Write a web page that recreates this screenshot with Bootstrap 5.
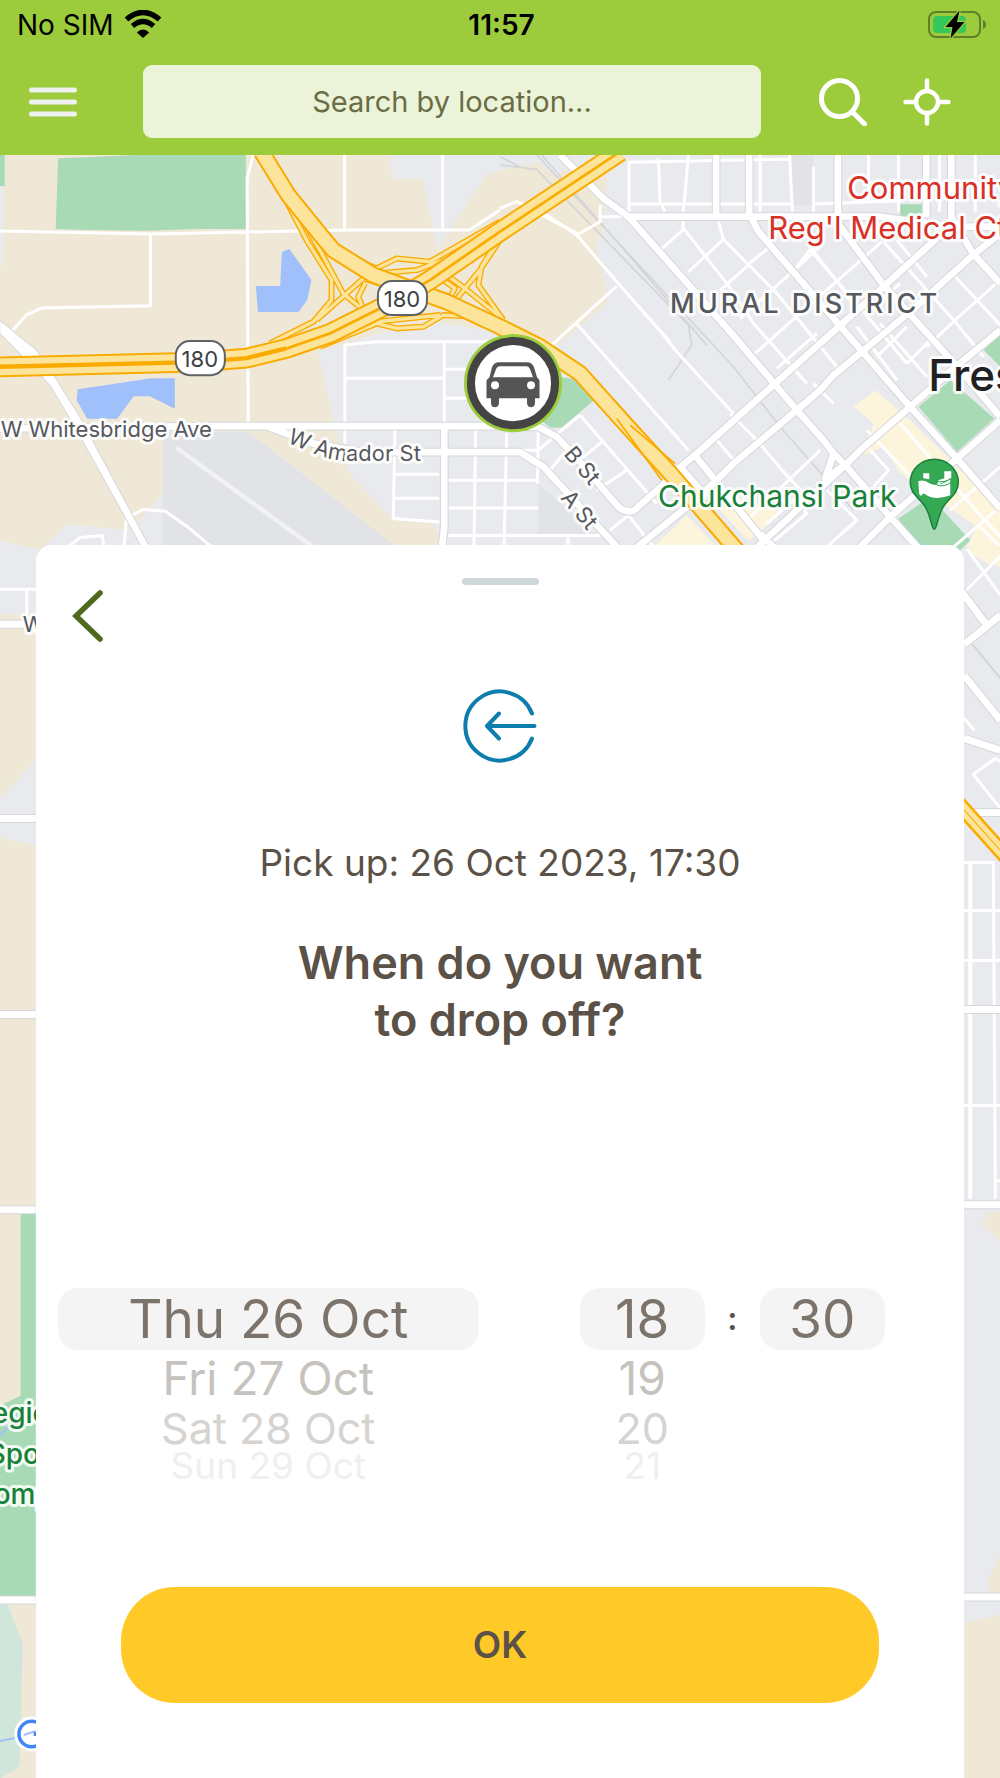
<!DOCTYPE html>
<html lang="en">
<head>
<meta charset="utf-8">
<meta name="viewport" content="width=device-width, initial-scale=1">
<title>Drop off time</title>
<link href="https://cdn.jsdelivr.net/npm/bootstrap@5.3.0/dist/css/bootstrap.min.css" rel="stylesheet">
<style>
  body { font-family: Inter, "Liberation Sans", sans-serif; color: #5b5146; }
  .app-top { background: #9ccb3b; }
  .status-row { height: 50px; padding: 0 14px 0 17px; font-size: 28px; line-height: 32px; color: #000; }
  .status-row > * { flex: 1 1 0; }
  .tool-row { padding: 15px 49px 17px 29px; }
  .icon-btn { width: 48px; height: 48px; padding: 0; border: 0; background: none; flex: none; }
  .icon-btn + .icon-btn { margin-left: 36px; }
  .icon-btn svg, .back-btn svg { display: block; }
  .search-box { height: 73px; margin-left: 66px; margin-right: 58px; border: 0; border-radius: 9px; background: #ebf4d9; font-size: 29px; text-align: center; color: #6b6c46; }
  .search-box::placeholder { color: #6b6c46; opacity: 1; }
  .map-stage { overflow: hidden; padding: 390px 36px 0; }
  .map-art { position: absolute; inset: 0; width: 100%; height: 100%; }
  .sheet { z-index: 1; border-radius: 16px 16px 0 0; background: #fff; padding-bottom: 76px; }
  .grabber { width: 77px; height: 7px; border-radius: 4px; background: #cdd6d8; margin-top: 33px; }
  .back-btn { align-self: flex-start; border: 0; background: none; padding: 0; margin: 4px 0 0 36px; width: 32px; height: 54px; }
  .step-icon { margin-top: 46px; }
  .pickup-line { font-size: 37px; line-height: 48px; margin: 76px 0 0; }
  .question { font-size: 45px; line-height: 57px; font-weight: 600; margin: 47px 0 0; }
  .wheels { display: grid; grid-template-columns: 420fr 101fr 125fr 55fr 125fr; padding: 0 79px 0 22px; margin-top: 240px; width: 100%; }
  .wheel { min-width: 0; text-align: center; white-space: nowrap; }
  .wheel label { display: block; }
  .wheel label:nth-of-type(1) { height: 62px; line-height: 62px; font-size: 53px; border-radius: 20px; background: #f4f4f4; color: #7c736a; }
  .wheel label:nth-of-type(2) { height: 56px; line-height: 56px; font-size: 46px; color: #c6c2bd; }
  .wheel label:nth-of-type(3) { height: 44px; line-height: 44px; font-size: 43px; color: #d6d3d0; }
  .wheel label:nth-of-type(4) { height: 32px; line-height: 32px; font-size: 37px; color: #f0efee; overflow: hidden; }
  .wheel-colon { grid-column: 4; height: 62px; line-height: 62px; font-size: 32px; font-weight: 600; text-align: center; }
  .ok-btn { align-self: stretch; height: 116px; margin: 105px 85px 0; border: 0; border-radius: 54px; background: #ffca28; color: #5b5146; font-size: 37px; font-weight: 600; }
  .halo { stroke: #fff; stroke-opacity: .85; stroke-width: 6px; stroke-linejoin: round; paint-order: stroke; }
</style>
<script src="https://cdn.jsdelivr.net/npm/bootstrap@5.3.0/dist/js/bootstrap.bundle.min.js"></script>
</head>
<body class="d-flex flex-column min-vh-100">

<header class="app-top">
  <div class="status-row d-flex align-items-center">
    <div class="d-flex align-items-center gap-2">
      <span>No SIM</span>
      <svg width="42" height="30" viewBox="0 0 42 30" fill="none" stroke="#000" aria-hidden="true">
        <path d="M4.500 9.500Q21-4.500 37.500 9.500" stroke-width="5.500"/><path d="M10.500 16Q21 7 31.500 16" stroke-width="5.200"/><path d="M14.800 22.500Q21 16.500 27.200 22.500L21 28Z" fill="#000" stroke="none"/>
      </svg>
    </div>
    <div class="text-center fw-semibold">11:57</div>
    <div class="d-flex justify-content-end">
      <svg width="60" height="30" viewBox="0 0 60 30" aria-hidden="true">
        <rect x="3" y="2" width="51" height="25" rx="7" fill="none" stroke="#5f7f2a" stroke-width="2"/>
        <rect x="7" y="6" width="33" height="17" rx="4" fill="#34c759"/>
        <path d="M57 10Q60 11 60 14.500T57 19Z" fill="#5f7f2a"/>
        <path d="M33.500 .5L19.500 17H26.500L24.500 28.500L38.500 12H31Z" fill="#000" stroke="#9ccb3b" stroke-width="2.500" paint-order="stroke"/>
      </svg>
    </div>
  </div>
  <nav class="tool-row d-flex align-items-center" aria-label="Map tools">
    <button class="icon-btn" type="button" aria-label="Menu">
      <svg width="48" height="48" stroke="#f0f0f0" stroke-width="5" stroke-linecap="round"><path d="M2.500 12H45.500M2.500 24H45.500M2.500 36H45.500"/></svg>
    </button>
    <input class="search-box form-control w-auto flex-grow-1" type="text" placeholder="Search by location..." aria-label="Search by location">
    <button class="icon-btn" type="button" aria-label="Search">
      <svg width="48" height="48" fill="none" stroke="#fff" stroke-width="5" stroke-linecap="round"><circle cx="20.500" cy="20.500" r="18"/><path d="M34 34.500L45.500 46"/></svg>
    </button>
    <button class="icon-btn" type="button" aria-label="My location">
      <svg width="48" height="48" fill="none" stroke="#fff" stroke-width="4.500" stroke-linecap="round"><circle cx="24" cy="24" r="11"/><path d="M24 2.500V12M24 36V45.500M2.500 24H12M36 24H45.500"/></svg>
    </button>
  </nav>
</header>

<main class="map-stage position-relative flex-grow-1 d-flex flex-column">
  <svg class="map-art" viewBox="0 155 1000 1623" preserveAspectRatio="xMidYMin slice" role="img" aria-label="Map of Fresno">
    <rect y="155" width="1000" height="1623" fill="#e8eaed"/>
    <g transform="translate(0 150) scale(.33333)">
      <!-- land, parks and water -->
      <path fill="#f0e8d7" d="M15 0H1168L1175 87H1268L1312 300L1370 210L1460 75L1500 62L1615 35L1660 75L1820 15V110L1805 250L1785 285L1810 370L1825 455L1680 580L1640 600L1500 545L1300 515L1150 545L955 605L1005 830L1045 965L1180 1110L1300 1120L1330 1190H1190L745 845H490L488 1030L395 1140L205 1122L120 1200L0 1170V350L10 340Z"/>
      <path fill="#e1e3e7" d="M490 845H745L1190 1190H487ZM1615 1000L1790 1160H1615ZM2375 15H2440V165H2375Z"/>
      <path fill="#f0e8d7" d="M1770 720L1830 745L2010 960L1960 960Z"/>
      <path fill="#a8dab5" d="M175 25L255 22L410 15H738V237H590L435 242L268 240L168 237ZM0 15H15V108H0ZM1680 680L1740 690L1782 750L1685 832H1650L1610 800ZM2755 770L2850 690L2982 805L2870 905ZM2950 600L3000 550V650ZM2695 1105L2790 1040L2910 1170L2880 1200H2760ZM2700 163H2768V210H2700Z"/>
      <path fill="#9fc0fa" d="M768 408H841L846 306L868 296L935 390L922 450L896 486H774ZM234 717L455 684H525V776L450 738H402L352 806H262L231 750Z"/>
      <path fill="#fdf4dc" d="M1960 1190L2060 1095L2150 1190ZM2560 770L2625 720L2740 820L2880 960L3000 1060V1190H2900L2930 1130L2830 1060L2700 970L2650 890L2590 915L2620 820ZM2160 1080L2210 1040L2345 1085L2245 1172Z"/>
      <!-- railway -->
      <g fill="none" stroke="#d3d5d9" stroke-width="5"><path d="M1500 45L1610 58L2065 525L2075 585L2005 690M1610 15L2200 650L2340 830L2560 1080M1625 15L2120 585M1500 20L1560 50"/></g>
      <path d="M530 893L940 1190" stroke="#f1f2f4" stroke-width="13"/>
      <!-- small streets -->
      <g fill="none" stroke="#fff" stroke-width="9" stroke-linejoin="round">
        <path d="M0 243L450 252L740 246L1035 240H1408L1500 180M760 15L742 85L745 820M452 252V467L125 474L80 495L35 545M1034 15V240M1328 15V240M1035 880V585L1130 575H1500M1035 684H1333M1333 575V830M1333 657H1420M1333 744H1420M1185 840L1180 1105L1318 1115M1185 972H1318M1185 1044H1318M1345 990H1615M1345 1073H1615M1345 1156H1800M1427 830L1422 1190M1520 850L1512 1190M1615 830L1612 1000M1704 1156V1190M205 1190L240 1162L308 1156L312 1190M373 1190L380 1105L430 1078L497 1083L570 1135L635 1190"/>
        <path d="M1887 185V37L2370 27M1975 27L1980 155L1995 185M2065 15L2050 185M1887 162H2375M2280 15V185M2368 15L2377 185M2605 15V155M2440 162L2700 152M2440 185V50M2695 15V185M2818 15V185M2925 15V185"/>
        <path d="M1500 175L1550 155L1640 195L1730 255L1850 395L1990 555L2030 605L2200 790M1730 255L1800 215V165M1800 200H1885M1850 408L1655 585M1730 522L2065 900M1550 155L1730 250M1850 395L2010 575"/>
        <path d="M1980 300L2048 240L2050 200M2155 215L2170 268L2065 365M2170 268L2330 430L2510 650M2240 345L2310 290M2050 235L2180 400L2260 520L2420 700M2160 420L2245 345M2220 505L2360 380L2465 285M2265 610L2400 490L2645 275M2390 350L2430 300L2620 520L2720 640M2330 655L2450 550M2430 290L2530 420L2570 480M2650 275L2860 510L2950 620M2780 590L2870 505L3000 390M2720 640L2790 570M2860 375L3000 525M2690 270L2780 380M2600 490L2700 400M2440 700L2500 760M2640 520L2780 680M2570 530L2690 690M2630 620L2720 530"/>
        <path d="M2190 790L2270 870L2350 965L2430 1050M2150 870L2210 940M2240 1110L2460 900M2300 1120L2380 1050L2420 1090L2300 1190M2480 1020L2570 1110L2480 1190M2610 900L2665 960L2620 1010M2600 840L2780 1030M2700 820L2900 1050L3000 1160M2850 1080L3000 950M2860 1190L3000 1070M2940 1130L3000 1190M1740 795L1970 1060M1740 795L1685 840L1615 900H1500M1650 960L1700 900M1740 930L1805 875M1790 1020L1880 960M1830 1140L1885 1095L1960 1190"/>
      </g>
      <!-- wide streets: grey edge, then white surface -->
      <defs>
        <path id="wide" d="M0 835L640 828H1520L1615 830L1670 860L1740 935L1850 1065Q1870 1088 1900 1082L2050 950M800 828L940 880L1090 906H1560L1630 950L1860 1200M1333 830V1130L1325 1200M1680 15L1810 145L1885 200L2190 545L2390 780L2470 870L2500 910L2540 950L2670 1100L2760 1200M1885 200H2640L2860 230H3000M2148 15V200M2247 15V190L2275 245L2730 770L2870 925L3000 1075M2513 15V220L2650 405L2880 660L3000 800M2778 15V200M2853 15V200L2918 310L3000 400M2035 955L2090 910L2650 410L2820 255M2150 990L2200 940L2390 780L2460 720L2500 675L2585 605L2730 485L2918 315L3000 250M2240 1220L2540 940L2580 900L2730 770L2860 655L3000 540M2570 1200L2670 1100L2870 925L3000 810M2500 910L2475 985L2540 940M2080 910L2290 1170M2040 950L2120 1040M1900 1200L2060 1070L2150 990M2330 1200L2280 1150"/>
      </defs>
      <g fill="none" stroke-linejoin="round"><use href="#wide" stroke="#d5d7dc" stroke-width="26"/><use href="#wide" stroke="#fff" stroke-width="20"/></g>
      <path d="M0 510L110 600L165 680L240 800L450 1190L425 1190L225 830L150 705L70 620L0 550Z" fill="#fff" stroke="#d5d7dc" stroke-width="3"/>
      <!-- freeway ramps -->
      <defs>
        <path id="ramps" d="M850 135L920 270L995 390V450L940 515L810 580M880 160L960 300L1030 430L1090 480M950 510L1040 430L1090 385L1170 410M1090 475L1075 440L1095 400M1000 300L1130 355L1190 325L1290 335L1500 215M1130 370L1250 360L1330 330M1270 440L1345 450L1365 415L1330 390M1340 375L1395 415L1500 500M1500 270L1440 360L1395 415L1360 460M1500 260L1445 350L1435 405L1510 510M960 590L1130 520L1190 535L1270 530L1330 495L1420 500M1130 515L1320 495"/>
      </defs>
      <g fill="none" stroke-linejoin="round"><use href="#ramps" stroke="#f9ab00" stroke-width="18"/><use href="#ramps" stroke="#fde49b" stroke-width="10"/></g>
      <!-- freeways -->
      <g fill="none" stroke-linejoin="round">
        <path d="M785 5L865 135L950 240L1000 300L1120 375L1230 415L1340 455L1500 530L1620 590L1740 670L1870 815L2020 980L2210 1200" stroke="#f9ab00" stroke-width="52"/>
        <path d="M785 5L865 135L950 240L1000 300L1120 375L1230 415L1340 455L1500 530L1620 590L1740 670L1870 815L2020 980L2210 1200" stroke="#fde49b" stroke-width="40"/>
        <path d="M1850 805L1985 990M1890 825L2025 940" stroke="#f9ab00" stroke-width="5"/>
        <path d="M0 650L590 636L740 624L860 595L990 550L1180 455L1290 390L1500 245L1860 5" stroke="#f9ab00" stroke-width="62"/>
        <path d="M0 650L590 636L740 624L860 595L990 550L1180 455L1290 390L1500 245L1860 5" stroke="#fde49b" stroke-width="50"/>
        <path d="M0 650L590 636L740 624L860 595" stroke="#f9ab00" stroke-width="13"/>
        <path d="M860 595L990 550L1180 455L1290 390L1500 245L1860 5" stroke="#f9ab00" stroke-width="8"/>
      </g>
    </g>

    <!-- west edge of the map -->
    <g fill="#f0e8d7"><path d="M0 538L36 549V540H0ZM0 614H36V758L18 780L0 798ZM0 837L36 845V1205H0ZM0 1213H36V1420H0ZM0 1603H36V1778H0Z"/></g>
    <path d="M21 1213H36V1595H0V1405L21 1395Z" fill="#a8dab5"/>
    <path d="M0 1603H8L23 1643L20 1765L0 1778Z" fill="#d0e6da"/>
    <path d="M0 1740L20 1736M0 1435L18 1415" stroke="#9fc0fa" stroke-width="2"/>
    <g fill="none" stroke="#d5d7dc" stroke-width="9"><path d="M0 624H36M0 818H36M0 1014H36M0 1209H36M0 1599H36"/></g>
    <g fill="none" stroke="#fff" stroke-width="7"><path d="M0 624H36M0 818H36M0 1014H36M0 1209H36M0 1599H36"/><path d="M0 589H36M27 589V614" stroke-width="3"/></g>
    <circle cx="32" cy="1733" r="16" fill="#4285f4" stroke="#fff" stroke-width="3"/><circle cx="32" cy="1733" r="11" fill="#fff"/><path d="M24 1734L36 1730" stroke="#9fc0fa" stroke-width="2"/><rect x="34" y="1731" width="4" height="4" fill="#4285f4"/>

    <!-- east edge of the map -->
    <path d="M981 1223L989 1211H1000V1241ZM987 1578L1000 1555V1596H992ZM964 1622L1000 1614V1778H964Z" fill="#f0e8d7"/>
    <path d="M964 549L976 545H1000V567L985 562Z" fill="#fdf4dc"/>
    <path d="M968 639L1000 678" stroke="#d3d5d9" stroke-width="2"/>
    <g fill="none" stroke="#fff" stroke-width="3"><path d="M965 591L1000 556M967 549L1000 595M964 718L974 730M1000 761L995 758L973 774L1000 808M964 862H993L995 1198M964 910H1000M964 960H1000M964 1105H1000M996 1180H1000"/><path d="M970 862V1198" stroke-width="4"/></g>
    <g fill="none"><path d="M964 644L1000 615M955 583L986 624M964 675L1000 720M964 738L1000 750M964 812H1000M964 1009H1000M964 1204H1000M964 1596H1000" stroke="#d5d7dc" stroke-width="9"/>
    <path d="M964 644L1000 615M955 583L986 624M964 675L1000 720M964 738L1000 750M964 812H1000M964 1009H1000M964 1204H1000M964 1596H1000" stroke="#fff" stroke-width="7"/>
    <path d="M950 794L1010 861" stroke="#f9ab00" stroke-width="16"/><path d="M950 794L1010 861" stroke="#fde49b" stroke-width="11"/><path d="M950 794L1010 861" stroke="#f9ab00" stroke-width="1"/></g>

    <!-- labels -->
    <g font-size="22" fill="#55585d">
      <text class="halo" x="1" y="437">W Whitesbridge Ave</text>
      <path id="amador" d="M287 442L316 454Q335 461 350 461H440" fill="none"/>
      <text class="halo"><textPath href="#amador">W Amador St</textPath></text>
      <text class="halo" transform="translate(563 454) rotate(50)">B St</text>
      <text class="halo" transform="translate(560 498) rotate(50)">A St</text>
      <text class="halo" x="23" y="632">W</text>
    </g>
    <text class="halo" x="670" y="313" font-size="27" font-weight="500" letter-spacing="3" fill="#55585d">MURAL DISTRICT</text>
    <g font-size="31" fill="#d93025"><text class="halo" x="847" y="199">Community</text><text class="halo" x="768" y="239">Reg'l Medical Ctr</text></g>
    <text class="halo" x="928" y="391" font-size="44" font-weight="500" fill="#202124">Fresno</text>
    <g fill="#188038"><text class="halo" x="658" y="507" font-size="30">Chukchansi Park</text>
      <g font-size="28" font-weight="500"><text class="halo" x="-8" y="1422">egional</text><text class="halo" x="-12" y="1463">Sports</text><text class="halo" x="-6" y="1503">omplex</text></g></g>

    <!-- route shields -->
    <g fill="#fff" stroke="#5f6368" stroke-width="2"><rect x="378" y="281" width="49" height="34" rx="14"/><rect x="176" y="341" width="49" height="34" rx="14"/></g>
    <g font-size="22" fill="#3c4043" text-anchor="middle"><text x="402" y="307">180</text><text x="200" y="367">180</text></g>

    <!-- stadium pin -->
    <path d="M934 529C931 529 931 515 924 505C917 496 910 493 910 482A24 23 0 0 1 958 482C958 493 951 496 944 505C937 515 937 529 934 529Z" fill="#34a853" stroke="#188038" stroke-width="1.500"/>
    <path d="M918 481Q924 479 929 483Q936 487 945 482L950 479V495Q934 501 925 494Q922 492 921 496L919 494ZM923 473H929V479L923 478ZM944 471L951 471V478L937 485L938 480L944 478Z" fill="#fff"/><path d="M937 481Q945 483 951 478M937 485Q945 487 951 482" stroke="#34a853" fill="none"/>

    <!-- car marker -->
    <circle cx="513" cy="383" r="49" fill="#9ccb3b"/><circle cx="513" cy="383" r="42" fill="#fff" stroke="#444" stroke-width="8"/>
    <path fill="#555" fill-rule="evenodd" d="M499 362H527Q532 362 534 367L537 377Q539.500 379 539.500 382V398H535V403Q534.500 407 531 407Q527.500 407 527 403V398H499V403Q498.500 407 495 407Q491 407 491 403V398H486.500V382Q486.500 379 489.500 377L492 367Q494 362 499 362ZM500 366Q497 366 496 369L493 377H533L530 369Q529 366 526 366ZM495 381A4 4 0 1 0 495 389A4 4 0 1 0 495 381ZM531 381A4 4 0 1 0 531 389A4 4 0 1 0 531 381Z"/>
  </svg>

  <section class="sheet position-relative flex-grow-1 d-flex flex-column align-items-center">
    <div class="grabber"></div>
    <button class="back-btn" type="button" aria-label="Back">
      <svg width="32" height="54" fill="none" stroke="#50691f" stroke-width="5.500" stroke-linecap="round"><path d="M28 4L4 27L28 50"/></svg>
    </button>
    <svg class="step-icon" width="74" height="74" fill="none" stroke="#0d7dad" stroke-width="4" stroke-linecap="round" stroke-linejoin="round" aria-hidden="true"><path d="M69 24.500A34.500 34.500 0 1 0 69 49.500M71.500 37H24M36 24.500L24 37L36 49.500"/></svg>
    <p class="pickup-line">Pick up: 26 Oct 2023, 17:30</p>
    <h1 class="question text-center">When do you want<br>to drop off?</h1>
    <form class="wheels">
      <div class="wheel" role="radiogroup" aria-label="Date">
        <input class="btn-check" type="radio" name="day" id="d26" checked><label for="d26">Thu 26 Oct</label>
        <input class="btn-check" type="radio" name="day" id="d27"><label for="d27">Fri 27 Oct</label>
        <input class="btn-check" type="radio" name="day" id="d28"><label for="d28">Sat 28 Oct</label>
        <input class="btn-check" type="radio" name="day" id="d29"><label for="d29">Sun 29 Oct</label>
      </div>
      <div></div>
      <div class="wheel" role="radiogroup" aria-label="Hour">
        <input class="btn-check" type="radio" name="hour" id="h18" checked><label for="h18">18</label>
        <input class="btn-check" type="radio" name="hour" id="h19"><label for="h19">19</label>
        <input class="btn-check" type="radio" name="hour" id="h20"><label for="h20">20</label>
        <input class="btn-check" type="radio" name="hour" id="h21"><label for="h21">21</label>
      </div>
      <div class="wheel-colon">:</div>
      <div class="wheel" role="radiogroup" aria-label="Minute">
        <input class="btn-check" type="radio" name="minute" id="m30" checked><label for="m30">30</label>
      </div>
    </form>
    <button class="ok-btn" type="button">OK</button>
  </section>
</main>
</body>
</html>
